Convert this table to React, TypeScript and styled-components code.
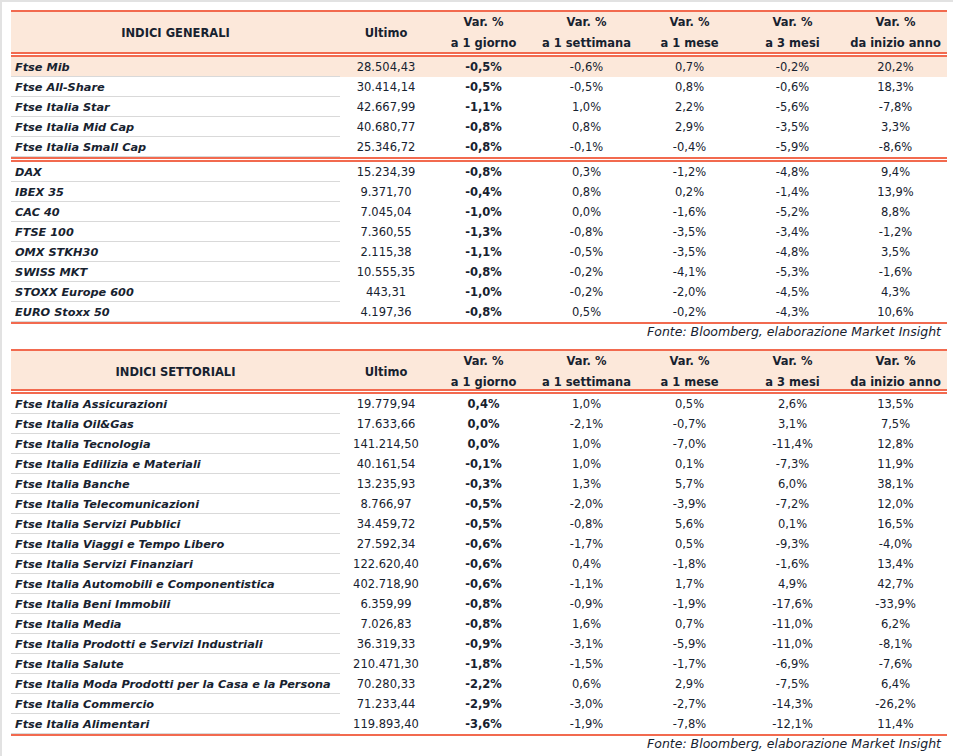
import * as React from 'react';
import styled, { createGlobalStyle } from 'styled-components';

const RED = '#f26a4f';
const PEACH = '#fce8da';
const INK = '#17222f';

const GlobalStyle = createGlobalStyle`
  html, body {
    margin: 0;
    background: #ffffff;
  }
  body {
    border-top: 2px solid #e2e2e2;
    border-left: 2px solid #e2e2e2;
    min-height: 754px;
    font-family: 'Century Gothic', 'DejaVu Sans', sans-serif;
    color: ${INK};
  }
`;

type Row = [string, string, string, string, string, string, string];

/** indici generali, split in the two groups divided by the double rule */
const italianIndices: Row[] = [
  ['Ftse Mib', '28.504,43', '-0,5%', '-0,6%', '0,7%', '-0,2%', '20,2%'],
  ['Ftse All-Share', '30.414,14', '-0,5%', '-0,5%', '0,8%', '-0,6%', '18,3%'],
  ['Ftse Italia Star', '42.667,99', '-1,1%', '1,0%', '2,2%', '-5,6%', '-7,8%'],
  ['Ftse Italia Mid Cap', '40.680,77', '-0,8%', '0,8%', '2,9%', '-3,5%', '3,3%'],
  ['Ftse Italia Small Cap', '25.346,72', '-0,8%', '-0,1%', '-0,4%', '-5,9%', '-8,6%'],
];

const foreignIndices: Row[] = [
  ['DAX', '15.234,39', '-0,8%', '0,3%', '-1,2%', '-4,8%', '9,4%'],
  ['IBEX 35', '9.371,70', '-0,4%', '0,8%', '0,2%', '-1,4%', '13,9%'],
  ['CAC 40', '7.045,04', '-1,0%', '0,0%', '-1,6%', '-5,2%', '8,8%'],
  ['FTSE 100', '7.360,55', '-1,3%', '-0,8%', '-3,5%', '-3,4%', '-1,2%'],
  ['OMX STKH30', '2.115,38', '-1,1%', '-0,5%', '-3,5%', '-4,8%', '3,5%'],
  ['SWISS MKT', '10.555,35', '-0,8%', '-0,2%', '-4,1%', '-5,3%', '-1,6%'],
  ['STOXX Europe 600', '443,31', '-1,0%', '-0,2%', '-2,0%', '-4,5%', '4,3%'],
  ['EURO Stoxx 50', '4.197,36', '-0,8%', '0,5%', '-0,2%', '-4,3%', '10,6%'],
];

const sectorIndices: Row[] = [
  ['Ftse Italia Assicurazioni', '19.779,94', '0,4%', '1,0%', '0,5%', '2,6%', '13,5%'],
  ['Ftse Italia Oil&Gas', '17.633,66', '0,0%', '-2,1%', '-0,7%', '3,1%', '7,5%'],
  ['Ftse Italia Tecnologia', '141.214,50', '0,0%', '1,0%', '-7,0%', '-11,4%', '12,8%'],
  ['Ftse Italia Edilizia e Materiali', '40.161,54', '-0,1%', '1,0%', '0,1%', '-7,3%', '11,9%'],
  ['Ftse Italia Banche', '13.235,93', '-0,3%', '1,3%', '5,7%', '6,0%', '38,1%'],
  ['Ftse Italia Telecomunicazioni', '8.766,97', '-0,5%', '-2,0%', '-3,9%', '-7,2%', '12,0%'],
  ['Ftse Italia Servizi Pubblici', '34.459,72', '-0,5%', '-0,8%', '5,6%', '0,1%', '16,5%'],
  ['Ftse Italia Viaggi e Tempo Libero', '27.592,34', '-0,6%', '-1,7%', '0,5%', '-9,3%', '-4,0%'],
  ['Ftse Italia Servizi Finanziari', '122.620,40', '-0,6%', '0,4%', '-1,8%', '-1,6%', '13,4%'],
  ['Ftse Italia Automobili e Componentistica', '402.718,90', '-0,6%', '-1,1%', '1,7%', '4,9%', '42,7%'],
  ['Ftse Italia Beni Immobili', '6.359,99', '-0,8%', '-0,9%', '-1,9%', '-17,6%', '-33,9%'],
  ['Ftse Italia Media', '7.026,83', '-0,8%', '1,6%', '0,7%', '-11,0%', '6,2%'],
  ['Ftse Italia Prodotti e Servizi Industriali', '36.319,33', '-0,9%', '-3,1%', '-5,9%', '-11,0%', '-8,1%'],
  ['Ftse Italia Salute', '210.471,30', '-1,8%', '-1,5%', '-1,7%', '-6,9%', '-7,6%'],
  ['Ftse Italia Moda Prodotti per la Casa e la Persona', '70.280,33', '-2,2%', '0,6%', '2,9%', '-7,5%', '6,4%'],
  ['Ftse Italia Commercio', '71.233,44', '-2,9%', '-3,0%', '-2,7%', '-14,3%', '-26,2%'],
  ['Ftse Italia Alimentari', '119.893,40', '-3,6%', '-1,9%', '-7,8%', '-12,1%', '11,4%'],
];

const periods = ['a 1 giorno', 'a 1 settimana', 'a 1 mese', 'a 3 mesi', 'da inizio anno'];

const Page = styled.div`
  padding: 8px 0 0 9px;
  width: 936px;
`;

const Section = styled.section<{ $gap?: number }>`
  margin-top: ${p => p.$gap ?? 0}px;
  border-top: 2px solid ${RED};
`;

const Grid = styled.div`
  display: grid;
  grid-template-columns: 329px 92px repeat(5, 103px);
`;

const HeaderRow = styled(Grid)<{ $height: number }>`
  height: ${p => p.$height}px;
  background: ${PEACH};
  font-weight: 700;
  font-size: 11.5px;
`;

const HeadCell = styled.div`
  display: flex;
  flex-direction: column;
  align-items: center;
  justify-content: center;
  line-height: 21px;
  white-space: nowrap;
`;

const DoubleRule = styled.div`
  height: 1px;
  border-top: 2px solid ${RED};
  border-bottom: 2px solid ${RED};
`;

const ClosingRule = styled.div`
  height: 2px;
  background: ${RED};
`;

const DataRow = styled(Grid)<{ $highlight?: boolean }>`
  height: 20px;
  background: ${p => (p.$highlight ? PEACH : 'transparent')};
  font-size: 11.5px;
`;

const NameCell = styled.div`
  box-sizing: border-box;
  padding: 2px 0 0 4px;
  border-bottom: 1px solid #d9d9d9;
  font-size: 11.3px;
  font-weight: 700;
  font-style: italic;
  line-height: 17px;
  white-space: nowrap;
`;

const ValueCell = styled.div<{ $bold?: boolean }>`
  padding-top: 1px;
  text-align: center;
  line-height: 19px;
  font-weight: ${p => (p.$bold ? 700 : 400)};
`;

const Source = styled.div`
  height: 16px;
  line-height: 16px;
  padding-right: 6px;
  text-align: right;
  font-style: italic;
  font-size: 12.5px;
`;

const TableHeader: React.FunctionComponent<{ title: string; height: number }> = ({ title, height }) => (
  <>
    <HeaderRow $height={height}>
      <HeadCell>{title}</HeadCell>
      <HeadCell>Ultimo</HeadCell>
      {periods.map(period => (
        <HeadCell key={period}>
          <span>Var. %</span>
          <span>{period}</span>
        </HeadCell>
      ))}
    </HeaderRow>
    <DoubleRule />
  </>
);

const Rows: React.FunctionComponent<{ rows: Row[]; highlightFirst?: boolean }> = ({
  rows,
  highlightFirst,
}) => (
  <>
    {rows.map(([name, last, ...vars], i) => (
      <DataRow key={name} $highlight={highlightFirst && i === 0}>
        <NameCell>{name}</NameCell>
        <ValueCell>{last}</ValueCell>
        {vars.map((v, j) => (
          <ValueCell key={j} $bold={j === 0}>
            {v}
          </ValueCell>
        ))}
      </DataRow>
    ))}
  </>
);

const App: React.FunctionComponent = () => (
  <>
    <GlobalStyle />
    <Page>
      <Section>
        <TableHeader title="INDICI GENERALI" height={40} />
        <Rows rows={italianIndices} highlightFirst />
        <DoubleRule />
        <Rows rows={foreignIndices} />
        <ClosingRule />
      </Section>
      <Source>Fonte: Bloomberg, elaborazione Market Insight</Source>

      <Section $gap={9}>
        <TableHeader title="INDICI SETTORIALI" height={38} />
        <Rows rows={sectorIndices} />
        <ClosingRule />
      </Section>
      <Source>Fonte: Bloomberg, elaborazione Market Insight</Source>
    </Page>
  </>
);

export default App;
